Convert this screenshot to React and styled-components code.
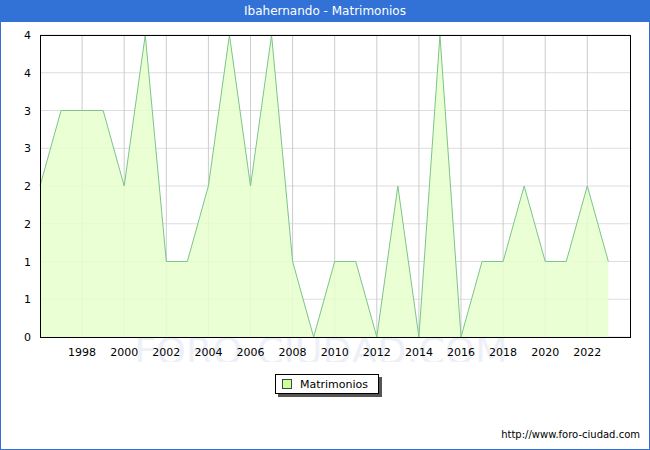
import React from "react";
import styled, { createGlobalStyle } from "styled-components";

const G = createGlobalStyle`body{margin:0;font-family:"DejaVu Sans",Verdana,sans-serif;}`;
const Frame = styled.div`width:648px;height:448px;border:1px solid #3272d6;background:#fff;display:flex;flex-direction:column;`;
const Title = styled.div`height:22px;background:#3272d6;color:#fff;font-size:12px;display:flex;align-items:center;justify-content:center;margin:-1px -1px 0;`;
const LegendRow = styled.div`display:flex;justify-content:center;margin-top:12px;padding-left:4px;`;
const Legend = styled.div`display:flex;align-items:center;gap:8px;border:1px solid #000;box-shadow:3px 3px 0 #555;padding:2px 10px 2px 6px;font-size:11px;height:14px;`;
const Swatch = styled.span`width:8px;height:8px;border:1px solid #444;background:#ccff99;`;
const Footer = styled.div`margin-top:auto;text-align:right;font-size:10px;padding:0 9px 9px 0;`;

const data=[2,3,3,3,2,4,1,1,2,4,2,4,1,0,1,1,0,2,0,4,0,1,1,2,1,1,2,1];
const X=i=>39+i*21.05, Y=v=>315-v*75.5;
const ylab=["0","1","1","2","2","3","3","4","4"];

export default function App(){
  const pts=data.map((v,i)=>`${X(i)},${Y(v)}`).join(" ");
  return <><G/><Frame>
    <Title>Ibahernando - Matrimonios</Title>
    <svg width="648" height="340" style={{display:"block"}}>
      <text x="320" y="342" fontSize="38" fill="#eef0f8" textAnchor="middle" fontFamily="DejaVu Sans">FORO-CIUDAD.COM</text>
      {ylab.map((l,i)=>{const y=315-i*37.75;return <g key={i}>
        <line x1="39" x2="629" y1={y} y2={y} stroke="#ddd"/>
        <text x="30" y={y+4} fontSize="11" textAnchor="end">{l}</text></g>})}
      {Array.from({length:13},(_,k)=>{const x=X(2+2*k);return <g key={k}>
        <line x1={x} x2={x} y1="13" y2="315" stroke="#ccc"/>
        <text x={x} y="334" fontSize="11" textAnchor="middle">{1998+2*k}</text></g>})}
      <polygon points={`${X(0)},315 ${pts} ${X(27)},315`} fill="#e6ffcc" fillOpacity="0.85"/>
      <polyline points={pts} fill="none" stroke="#7cc48a" strokeWidth="1"/>
      <rect x="39.5" y="13.5" width="590" height="302" fill="none" stroke="#000"/>
    </svg>
    <LegendRow><Legend><Swatch/>Matrimonios</Legend></LegendRow>
    <Footer>http://www.foro-ciudad.com</Footer>
  </Frame></>;
}
